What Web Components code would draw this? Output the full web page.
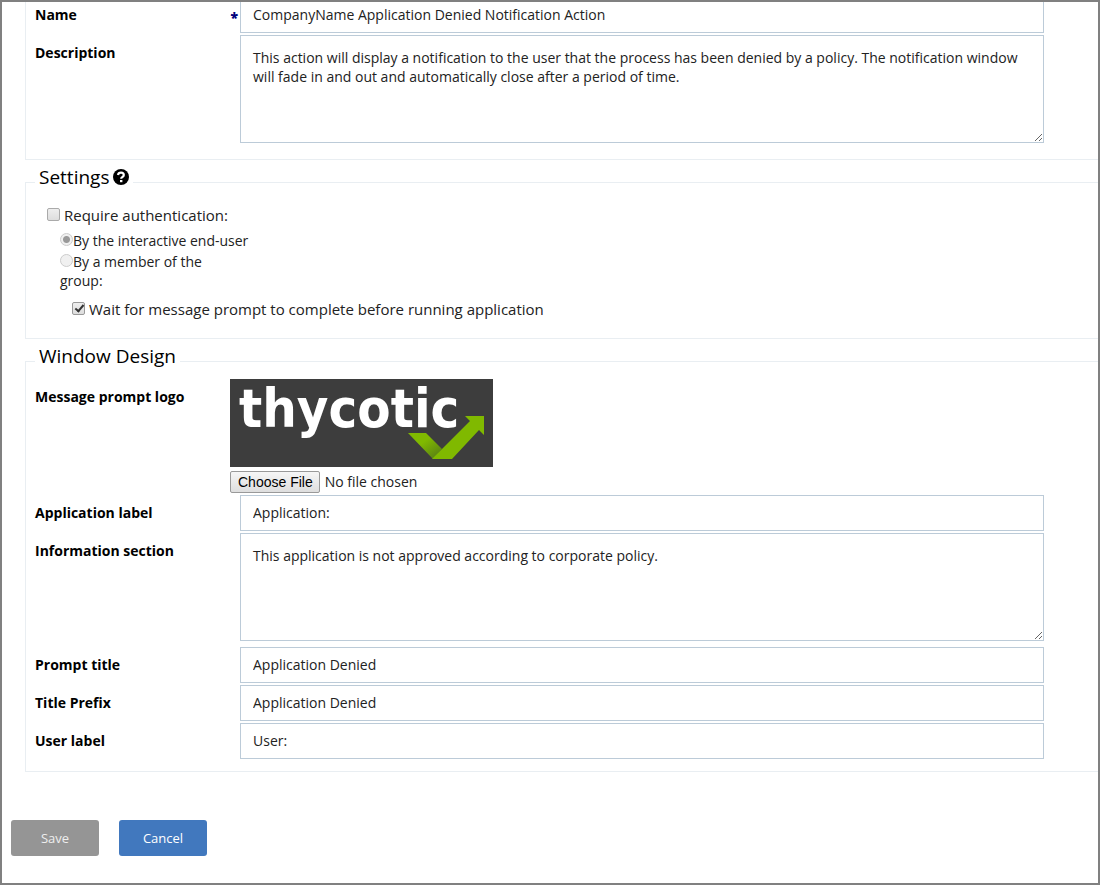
<!DOCTYPE html>
<html lang="en">
<head>
<meta charset="utf-8">
<title>Notification Action</title>
<style>
html, body { margin: 0; }
body { font: 14px/20px "Open Sans", "Noto Sans", sans-serif; color: #000; background: #fff; }
</style>
</head>
<body>
<action-page>
  <form-section continued>
    <text-field label="Name" required value="CompanyName Application Denied Notification Action"></text-field>
    <text-field label="Description" multiline value="This action will display a notification to the user that the process has been denied by a policy. The notification window will fade in and out and automatically close after a period of time."></text-field>
  </form-section>
  <form-section>
    <span slot="title">Settings</span><help-icon slot="title"></help-icon>
    <auth-settings></auth-settings>
  </form-section>
  <form-section>
    <span slot="title">Window Design</span>
    <logo-field label="Message prompt logo"><brand-logo></brand-logo></logo-field>
    <text-field label="Application label" value="Application:"></text-field>
    <text-field label="Information section" multiline value="This application is not approved according to corporate policy."></text-field>
    <text-field label="Prompt title" value="Application Denied"></text-field>
    <text-field label="Title Prefix" value="Application Denied"></text-field>
    <text-field label="User label" value="User:"></text-field>
  </form-section>
  <action-button slot="actions" muted>Save</action-button>
  <action-button slot="actions">Cancel</action-button>
</action-page>

<script>
function define(name, html, setup) {
  const template = document.createElement('template');
  template.innerHTML = html;
  customElements.define(name, class extends HTMLElement {
    constructor() {
      super();
      this.attachShadow({ mode: 'open' }).append(template.content.cloneNode(true));
    }
    connectedCallback() { if (setup) setup(this, this.shadowRoot); }
  });
}

define('action-page', `
<style>
:host { display: block; box-sizing: border-box; min-height: 100vh; border: 2px solid #808080; overflow: hidden; }
main { margin-left: 23px; }
footer { display: flex; gap: 20px; padding: 48px 9px 24px; }
</style>
<main><slot></slot></main>
<footer><slot name="actions"></slot></footer>`);

define('form-section', `
<style>
:host { display: block; margin-top: 4px; }
:host([continued]) { margin-top: -5px; }
:host([continued]) legend { display: none; }
:host([continued]) fieldset { border-top: 0; }
fieldset { margin: 0; min-width: 0; border: 1px solid #e9eef2; border-right: 0; padding: 0 54px 10px 9px; }
legend { display: flex; align-items: center; gap: 4px; padding: 0 4px 10px; font-size: 19px; line-height: 26px; }
</style>
<fieldset><legend><slot name="title"></slot></legend><slot></slot></fieldset>`);

define('help-icon', `
<style>:host { display: block; width: 16px; height: 16px; } svg { display: block; }</style>
<svg width="16" height="16" viewBox="0 0 16 16" role="img" aria-label="Help">
<circle cx="8" cy="8" r="8"/>
<path d="M5 6Q5.4 3.6 8 3.6Q10.8 3.6 10.8 6Q10.8 7.2 9.4 8Q8.2 8.6 8.2 9.8" fill="none" stroke="#fff" stroke-width="2.2"/>
<path d="M7 11h2.4v2.2H7z" fill="#fff"/>
</svg>`);

const rowStyle = `
:host { display: grid; grid-template-columns: 205px minmax(0, 1fr); align-items: start; }
label { display: flex; justify-content: space-between; padding-right: 2px; font-weight: 700; font-size: 14px; line-height: 36px; }`;

define('text-field', `
<style>${rowStyle}
b { padding-top: 6px; color: #00007c; line-height: 30px; }
input, textarea { display: block; box-sizing: border-box; width: 100%; margin: 0 0 2px; border: 1px solid #bccbd8; border-radius: 0; background: #fff; color: #222; font: inherit; outline: 0; }
input { height: 36px; padding: 0 12px 2px; }
textarea { height: 108px; margin-bottom: 6px; padding: 12px; line-height: 19px; resize: both; }
</style>
<label for="field"><span></span></label>`, (host, root) => {
  if (root.getElementById('field')) return;
  root.querySelector('span').textContent = host.getAttribute('label');
  if (host.hasAttribute('required')) {
    const mark = document.createElement('b');
    mark.textContent = '*';
    root.querySelector('label').append(mark);
  }
  const field = document.createElement(host.hasAttribute('multiline') ? 'textarea' : 'input');
  field.id = 'field';
  field.spellcheck = false;
  field.value = host.getAttribute('value');
  root.append(field);
});

define('logo-field', `
<style>${rowStyle}
:host { grid-template-columns: 195px minmax(0, 1fr); }
input { display: block; height: 22px; margin: 4px 0 2px; font: inherit; line-height: 22px; color: #222; }
input::file-selector-button { box-sizing: border-box; height: 22px; margin: 0 5px 0 0; padding: 0 6px 0 7px; border: 1px solid #999; border-radius: 2px; background: linear-gradient(#f6f6f6, #dedede); color: #000; font: 14px/20px "Liberation Sans", Arial, sans-serif; }
</style>
<label for="file"></label>
<div><slot></slot><input id="file" type="file"></div>`, (host, root) => {
  root.querySelector('label').textContent = host.getAttribute('label');
});

define('brand-logo', `
<style>:host { display: block; width: 263px; height: 88px; background: #3d3d3d; } svg { display: block; overflow: visible; }
text { font: 700 54px "DejaVu Sans Condensed", "DejaVu Sans", sans-serif; fill: #fff; }</style>
<svg width="263" height="88" viewBox="0 0 263 88">
<defs><linearGradient id="fold" x1="0" y1="0" x2="1" y2="1"><stop offset=".4" stop-color="#80b900"/><stop offset="1" stop-color="#527619"/></linearGradient></defs>
<text x="9" y="48">thycotic</text>
<path d="M178 54h18l16 16-9 10z" fill="url(#fold)"/>
<path d="M202 80l38-38-5-5h19v19l-5-5-27 29z" fill="#80b900"/>
</svg>`);

define('auth-settings', `
<style>
:host { display: block; padding: 5px 0 9px 12px; }
label { display: block; }
.check { display: flex; align-items: center; gap: 4px; font-size: 15px; line-height: 20px; color: #222; }
.group { width: 200px; margin: 6px 0 9px 13px; line-height: 19px; color: #222; }
.group label { margin-bottom: 2px; }
.group .narrow { width: 150px; }
.nested { margin-left: 25px; }
input { appearance: none; box-sizing: border-box; width: 13px; height: 13px; margin: 0; border: 1px solid #aaa; background: linear-gradient(#eee, #ddd); }
.check input { position: relative; margin-bottom: 2px; border-radius: 2px; }
.group input { display: inline-block; border-color: #ccc; border-radius: 50%; background: #f0f0f0; }
.group input:checked { background: radial-gradient(circle, #999 0 3px, #f0f0f0 4px); }
.check input:checked { border-color: #999; }
.check input:checked::after { content: ""; position: absolute; left: 4px; top: 0; width: 3px; height: 7px; border: solid #333; border-width: 0 2px 2px 0; transform: rotate(40deg); }
</style>
<label class="check"><input type="checkbox"><span>Require authentication:</span></label>
<div class="group">
<label><input type="radio" name="who" checked disabled>By the interactive end-user</label>
<label class="narrow"><input type="radio" name="who" disabled>By a member of the group:</label>
</div>
<label class="check nested"><input type="checkbox" checked><span>Wait for message prompt to complete before running application</span></label>`);

define('action-button', `
<style>
:host { display: block; }
button { display: block; width: 88px; height: 36px; border: 0; border-radius: 3px; padding: 0; background: #4178be; color: #fff; font: inherit; font-size: 13px; }
:host([muted]) button { background: #959595; color: #eee; }
</style>
<button type="button"><slot></slot></button>`);
</script>
</body>
</html>
